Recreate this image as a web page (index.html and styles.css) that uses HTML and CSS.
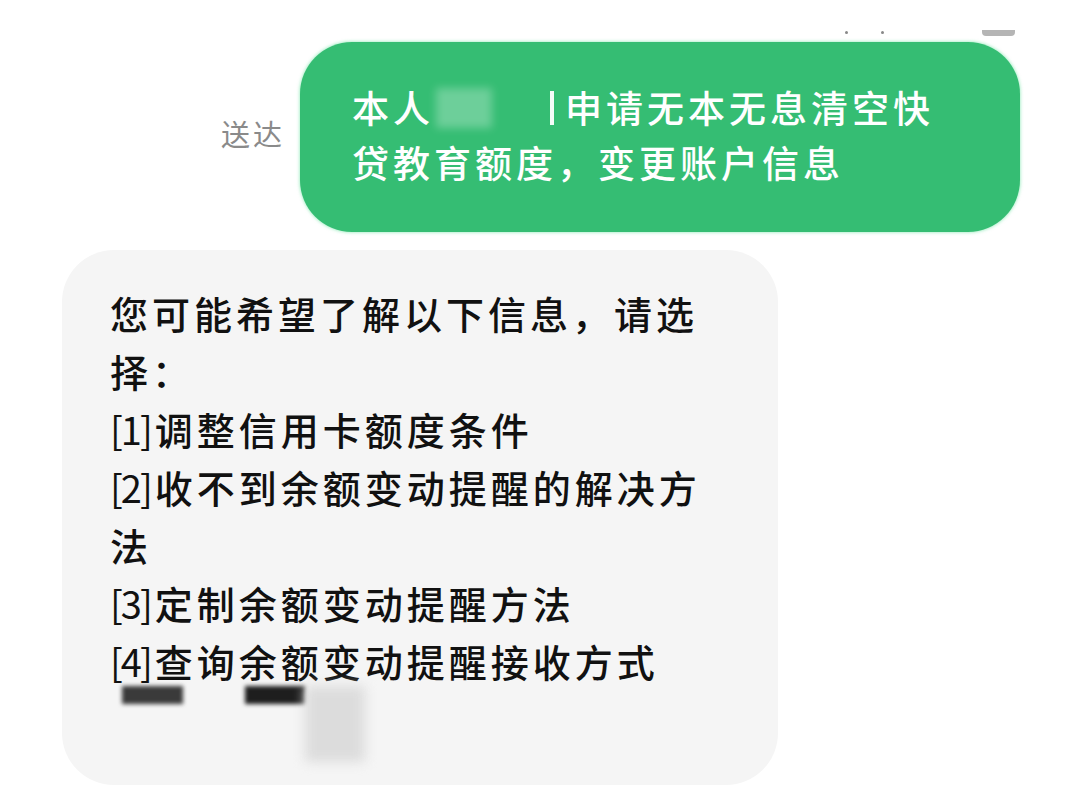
FILE: index.html
```html
<!DOCTYPE html>
<html lang="zh-CN">
<head>
<meta charset="utf-8">
<title>聊天</title>
<link rel="stylesheet" href="styles.css">
</head>
<body>
<div class="page">
  <div class="top">
    <span class="dot"></span>
    <span class="dot dot2"></span>
    <span class="bar"></span>
  </div>
  <div class="sent-row">
    <span class="status">送达</span>
    <div class="bubble-green">
      <div class="gline">本人<span class="mask"></span><span class="mask-bar"></span>申请无本无息清空快</div>
      <div class="gline">贷教育额度，变更账户信息</div>
    </div>
  </div>
  <div class="recv-row">
    <div class="bubble-gray">
      <div class="line">您可能希望了解以下信息，请选</div>
      <div class="line">择：</div>
      <div class="line"><span class="num">[1]</span>调整信用卡额度条件</div>
      <div class="line"><span class="num">[2]</span>收不到余额变动提醒的解决方</div>
      <div class="line">法</div>
      <div class="line"><span class="num">[3]</span>定制余额变动提醒方法</div>
      <div class="line"><span class="num">[4]</span>查询余额变动提醒接收方式</div>
      <div class="blur-row">
        <span class="blk blk1"></span>
        <span class="blk blk2"></span>
        <span class="blk blk3"></span>
      </div>
    </div>
  </div>
</div>
</body>
</html>
```

FILE: styles.css
```css
html, body {
  margin: 0;
  padding: 0;
  background: #ffffff;
}
.page {
  width: 1080px;
  height: 810px;
  overflow: hidden;
  font-family: "Noto Sans CJK SC", "Noto Sans", sans-serif;
}
.top {
  height: 42px;
  box-sizing: border-box;
  padding-top: 30px;
  display: flex;
  align-items: flex-start;
  padding-left: 845px;
}
.dot {
  width: 3px;
  height: 3px;
  border-radius: 50%;
  background: #888;
  margin-top: 1px;
}
.dot2 {
  margin-left: 33px;
}
.bar {
  width: 33px;
  height: 6px;
  border-radius: 0 0 4px 4px;
  background: #b5b5b5;
  margin-left: 98px;
}
.sent-row {
  display: flex;
  justify-content: flex-end;
  align-items: center;
  padding-right: 60px;
}
.status {
  font-size: 29px;
  color: #8a8a8a;
  letter-spacing: 3px;
  margin-right: 15px;
  margin-top: -8px;
}
.bubble-green {
  width: 720px;
  height: 190px;
  box-sizing: border-box;
  padding: 38px 0 0 52px;
  background: #35bd73;
  border-radius: 52px;
  box-shadow: 0 0 3px 1px rgba(120, 230, 170, 0.55);
  color: #ffffff;
  font-size: 37px;
  font-weight: 500;
  letter-spacing: 4px;
}
.gline {
  height: 55px;
  line-height: 55px;
  white-space: nowrap;
  display: flex;
  align-items: center;
}
.mask {
  display: inline-block;
  width: 56px;
  height: 40px;
  margin-left: 2px;
  background: rgba(255, 255, 255, 0.28);
  filter: blur(4px);
}
.mask-bar {
  display: inline-block;
  width: 4px;
  height: 34px;
  margin-left: 58px;
  margin-right: 11px;
  background: rgba(255, 255, 255, 0.95);
}
.recv-row {
  padding: 18px 0 0 62px;
}
.bubble-gray {
  width: 716px;
  height: 535px;
  box-sizing: border-box;
  padding: 34px 0 0 48px;
  background: #f5f5f5;
  border-radius: 52px;
  color: #111111;
  font-size: 38px;
  font-weight: 500;
  letter-spacing: 4px;
}
.line {
  height: 58px;
  line-height: 58px;
  white-space: nowrap;
}
.num {
  letter-spacing: -2px;
  margin-right: 4px;
  font-weight: 400;
}
.blur-row {
  position: relative;
  height: 80px;
}
.blk {
  position: absolute;
  top: -4px;
}
.blk1 {
  left: 12px;
  width: 61px;
  height: 18px;
  background: #3a3a3a;
  filter: blur(2px);
}
.blk2 {
  left: 135px;
  width: 60px;
  height: 18px;
  background: #1e1e1e;
  filter: blur(2px);
}
.blk3 {
  left: 195px;
  width: 60px;
  height: 76px;
  background: #dcdcdc;
  filter: blur(6px);
}
```
